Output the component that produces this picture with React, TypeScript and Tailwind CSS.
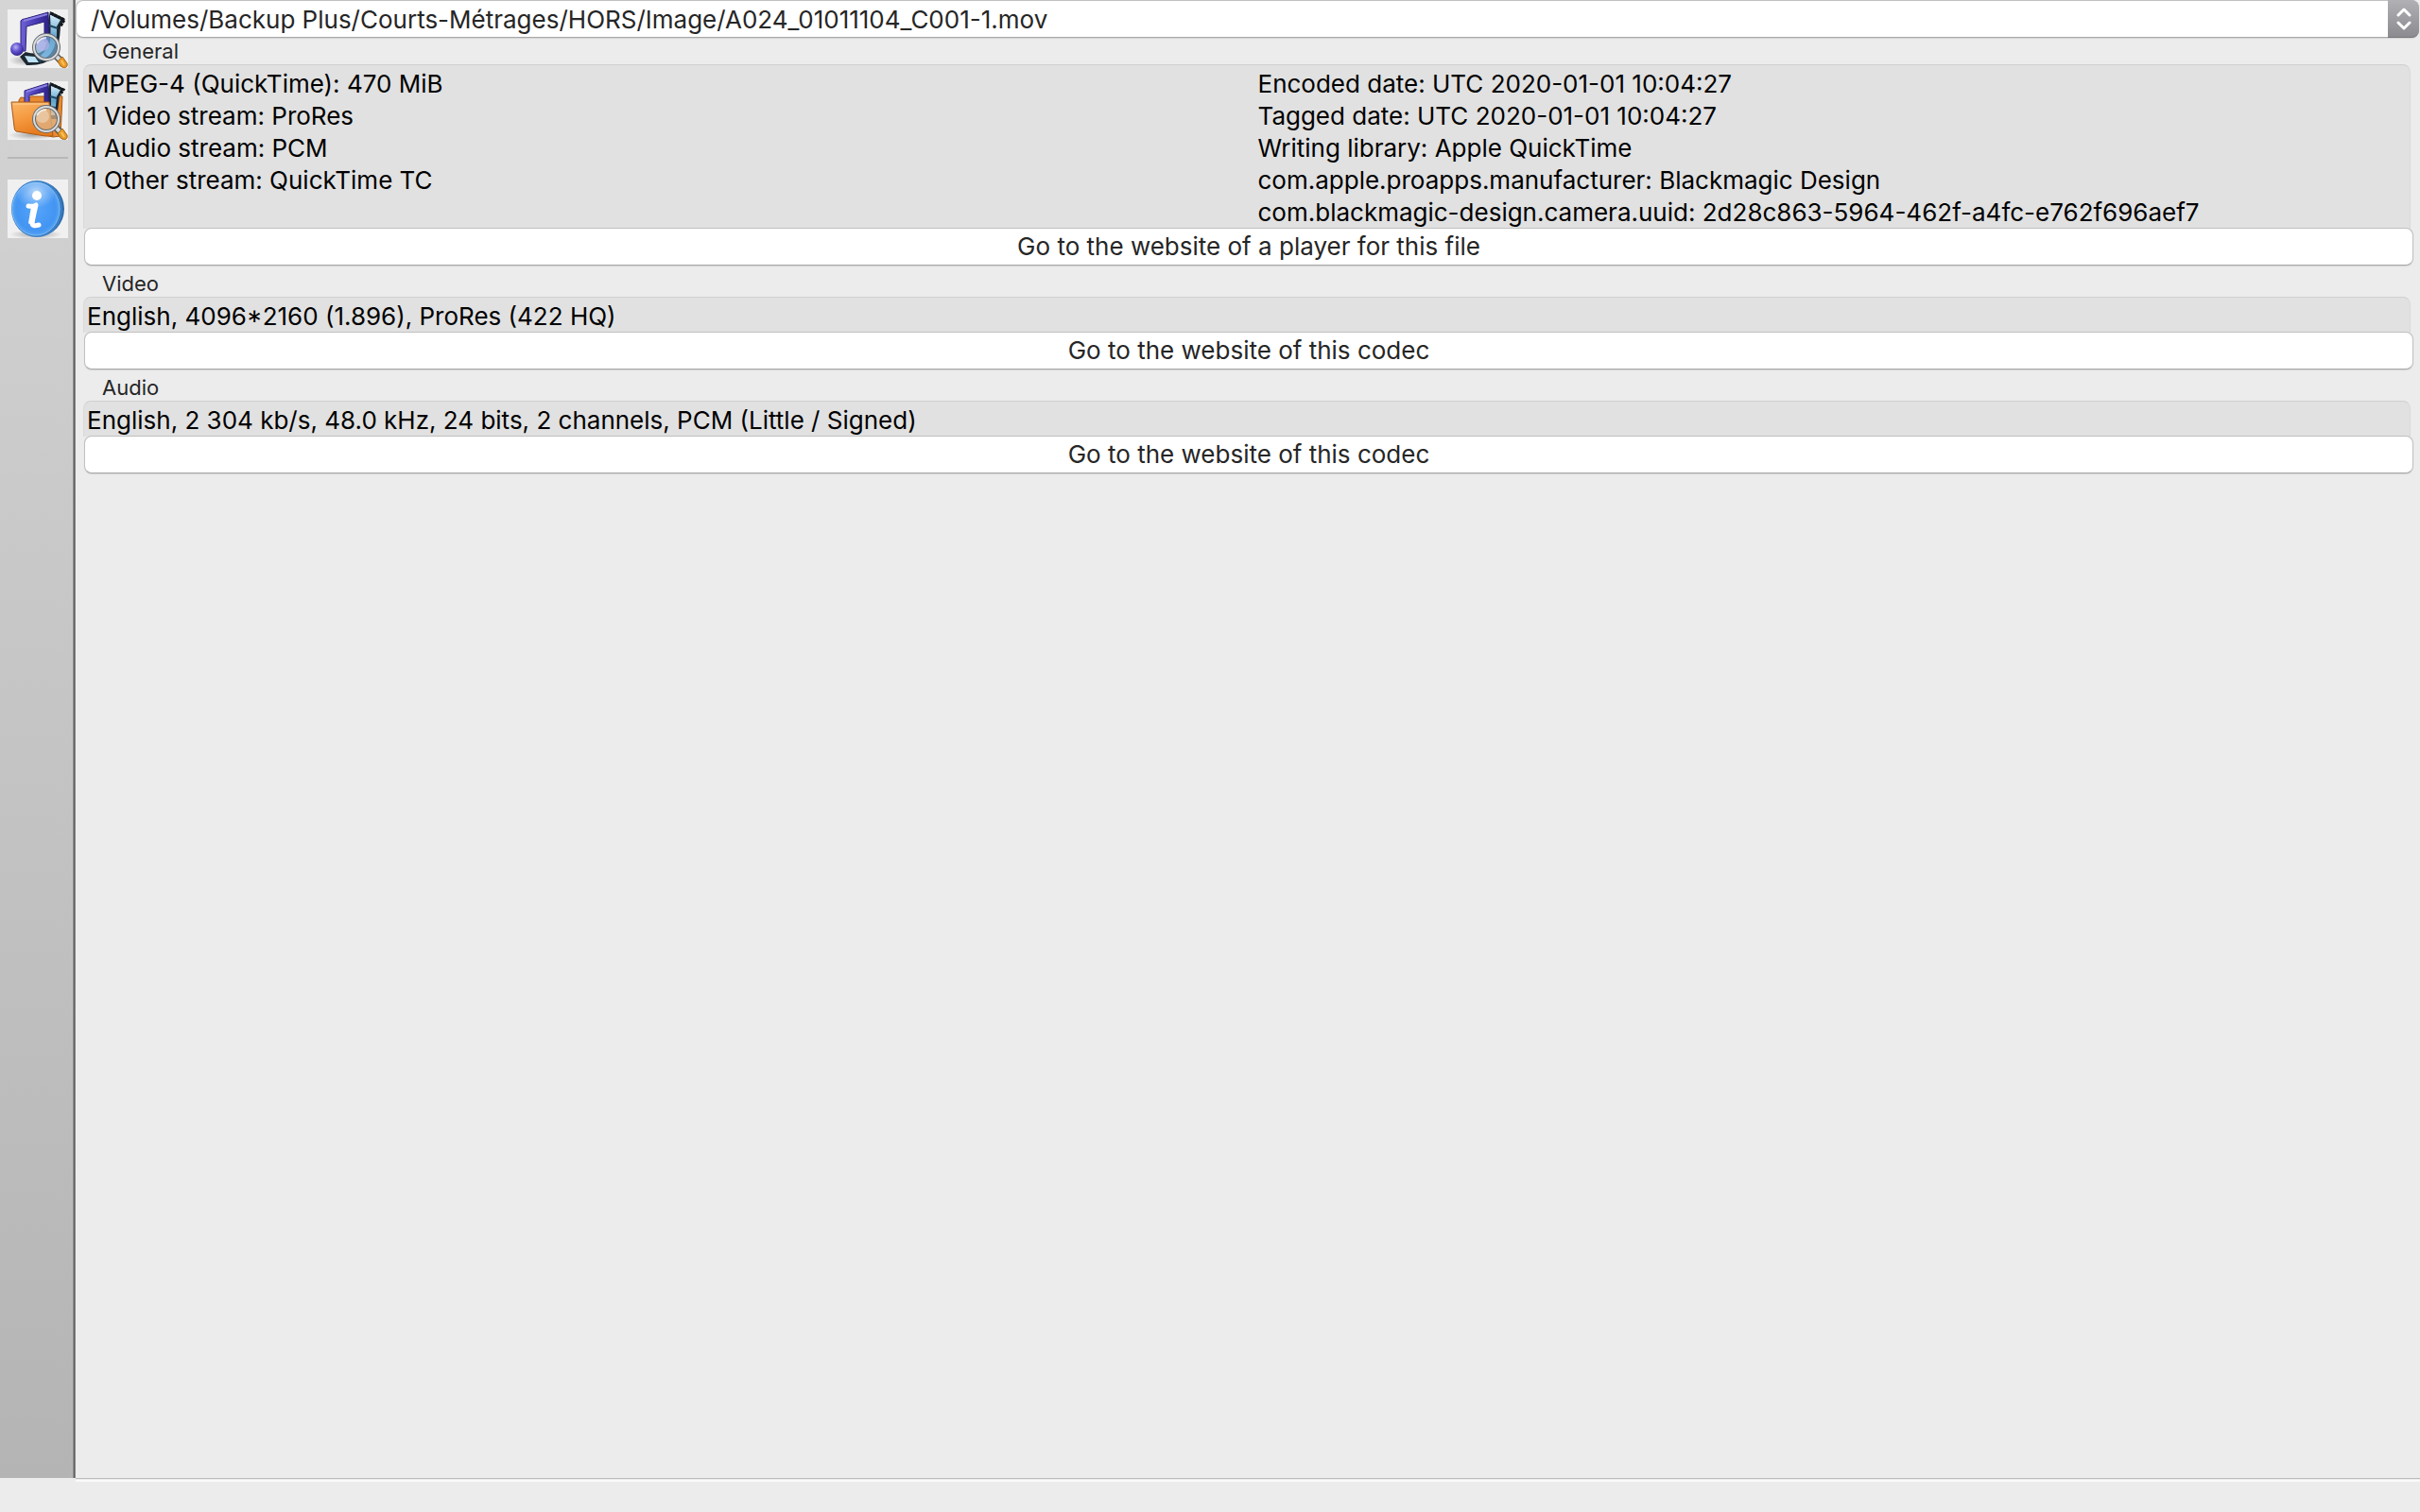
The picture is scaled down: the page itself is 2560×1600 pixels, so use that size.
import React from "react";

const general = [
  ["MPEG-4 (QuickTime): 470 MiB", "1 Video stream: ProRes", "1 Audio stream: PCM", "1 Other stream: QuickTime TC"],
  [
    "Encoded date: UTC 2020-01-01 10:04:27",
    "Tagged date: UTC 2020-01-01 10:04:27",
    "Writing library: Apple QuickTime",
    "com.apple.proapps.manufacturer: Blackmagic Design",
    "com.blackmagic-design.camera.uuid: 2d28c863-5964-462f-a4fc-e762f696aef7",
  ],
];

function Defs() {
  return (
    <svg className="absolute size-0" aria-hidden="true">
      <defs>
        <linearGradient id="note" x1="0" x2="1" y1="0" y2="0">
          <stop offset="0" stopColor="#6f63d6" />
          <stop offset="0.5" stopColor="#4a3cb4" />
          <stop offset="1" stopColor="#2f2388" />
        </linearGradient>
        <radialGradient id="head" cx="0.4" cy="0.35" r="0.65">
          <stop offset="0" stopColor="#b9b2f5" />
          <stop offset="0.5" stopColor="#6354cf" />
          <stop offset="1" stopColor="#33268f" />
        </radialGradient>
        <linearGradient id="film" x1="0" x2="0" y1="0" y2="1">
          <stop offset="0" stopColor="#d4ecfb" />
          <stop offset="0.5" stopColor="#5fa3cc" />
          <stop offset="1" stopColor="#a5d6f0" />
        </linearGradient>
        <linearGradient id="folder" x1="0" x2="0.4" y1="0" y2="1">
          <stop offset="0" stopColor="#fbb768" />
          <stop offset="0.5" stopColor="#f59a41" />
          <stop offset="1" stopColor="#e67a1d" />
        </linearGradient>
        <radialGradient id="info" cx="0.5" cy="0.5" r="0.55">
          <stop offset="0" stopColor="#55a5fb" />
          <stop offset="0.75" stopColor="#4395f2" />
          <stop offset="1" stopColor="#5fa9f4" />
        </radialGradient>
        <radialGradient id="shine" cx="0.5" cy="0.3" r="0.55">
          <stop offset="0" stopColor="#ffffff" stopOpacity="0.6" />
          <stop offset="1" stopColor="#ffffff" stopOpacity="0" />
        </radialGradient>
        <radialGradient id="shadow">
          <stop offset="0" stopColor="#000000" stopOpacity="0.3" />
          <stop offset="1" stopColor="#000000" stopOpacity="0" />
        </radialGradient>
      </defs>
    </svg>
  );
}

function Magnifier({ tint, spot }: { tint: string; spot: string }) {
  return (
    <g>
      <path d="M50 48 L58 56" stroke="#55585a" strokeWidth="7" />
      <path d="M50 48 L57 55" stroke="#d5d7d8" strokeWidth="4" />
      <path d="M53 55 L58 50 L63 57 Q64 61 60 62 L56 60 Z" fill="#e8992a" stroke="#a8691c" strokeWidth="1" />
      <path d="M57 54 L60 59" stroke="#f8c45a" strokeWidth="2" />
      <circle cx="41" cy="40" r="12" fill={tint} fillOpacity="0.72" />
      <circle cx="37" cy="37" r="7" fill={spot} fillOpacity="0.75" />
      <circle cx="41" cy="40" r="13" fill="none" stroke="#66696c" strokeWidth="4" />
      <circle cx="41" cy="40" r="13" fill="none" stroke="#d9dcde" strokeWidth="2" />
      <path d="M31 36 Q34 30 41 30" fill="none" stroke="#ffffff" strokeOpacity="0.7" strokeWidth="2" />
    </g>
  );
}

function FileIcon() {
  return (
    <svg viewBox="0 0 64 62" className="h-[62px] w-16" aria-hidden="true">
      <ellipse cx="20" cy="54" rx="19" ry="6" fill="url(#shadow)" />
      <path d="M45 2 L61 10 L56 18 Q55 38 50 50 Q38 60 20 59 L13 50 L19 45 Q33 49 38 43 Q44 34 43 12 Z" fill="#1d2830" />
      <path d="M46 6 L56 11 L52 18 Q53 36 46 46 Q40 54 31 52 Q42 44 45 34 Q46 22 45 6 Z" fill="url(#film)" />
      <path d="M44 17 L53 20 M45 29 L52 31 M30 48 L35 56" stroke="#1f4763" strokeWidth="2" />
      <path d="M18 49 L29 50 L33 56 L22 56 Z" fill="#bfe3f6" />
      <path d="M46 4 L60 11 L56 18" fill="none" stroke="#11161a" strokeWidth="3" strokeDasharray="3 1" />
      <path d="M14 12 Q15 10 18 10 L43 3 L44 34 L39 34 L39 13 L20 18 L19 44 L14 44 Z" fill="url(#note)" stroke="#2a2078" strokeWidth="1" />
      <path d="M17 12 L42 5" stroke="#8a80e2" strokeWidth="2" />
      <circle cx="10" cy="42" r="7" fill="url(#head)" />
      <Magnifier tint="#6fa9d6" spot="#b5b4ea" />
    </svg>
  );
}

function FolderIcon() {
  return (
    <svg viewBox="0 0 64 62" className="h-[62px] w-16" aria-hidden="true">
      <ellipse cx="26" cy="57" rx="25" ry="5" fill="url(#shadow)" />
      <path d="M12 20 L14 17 L22 18 L25 16 L58 16 L56 58 L48 59 L12 50 Z" fill="#e88a30" stroke="#a85a18" strokeWidth="1" />
      <path d="M45 1 L60 8 L55 15 L52 40 L43 40 L43 8 Z" fill="#1d2830" />
      <path d="M46 5 L56 9 L52 16 L50 36 L46 36 Z" fill="url(#film)" />
      <path d="M45 16 L52 18 M46 27 L51 28" stroke="#1f4763" strokeWidth="2" />
      <path d="M46 3 L59 9 L55 15" fill="none" stroke="#11161a" strokeWidth="3" strokeDasharray="3 1" />
      <path d="M18 10 L43 2 L44 26 L39 26 L39 11 L23 15 L23 26 L18 26 Z" fill="url(#note)" stroke="#2a2078" strokeWidth="1" />
      <path d="M20 11 L42 4" stroke="#8a80e2" strokeWidth="2" />
      <path d="M4 22 L44 22 L48 58 L40 58 L9 53 Q7 52 7 48 Z" fill="url(#folder)" stroke="#a85a18" strokeWidth="1" />
      <path d="M6 24 L43 24" stroke="#fdd09a" strokeWidth="1" />
      <Magnifier tint="#dcb78e" spot="#eacdae" />
    </svg>
  );
}

function InfoIcon() {
  return (
    <svg viewBox="0 0 64 62" className="h-[62px] w-16" aria-hidden="true">
      <ellipse cx="30" cy="58" rx="28" ry="5" fill="url(#shadow)" />
      <ellipse cx="33" cy="31" rx="27" ry="29" fill="#2f6cab" />
      <ellipse cx="31" cy="31" rx="27" ry="30" fill="#3b7fc6" />
      <ellipse cx="30" cy="31" rx="25" ry="28" fill="url(#info)" stroke="#7cbcf8" strokeWidth="1" />
      <ellipse cx="30" cy="19" rx="20" ry="16" fill="url(#shine)" />
      <circle cx="31" cy="17" r="5" fill="#ffffff" />
      <path d="M22 28 Q27 29 30 27 Q27 40 26 46 Q26 50 33 48" fill="none" stroke="#ffffff" strokeWidth="5" strokeLinejoin="round" strokeLinecap="round" />
      <path d="M28 29 Q26 40 25 47" fill="none" stroke="#ffffff" strokeWidth="6" />
    </svg>
  );
}

function ToolButton({ label, children }: { label: string; children: React.ReactNode }) {
  return (
    <button type="button" aria-label={label} className="block bg-[#f0f0f0]">
      {children}
    </button>
  );
}

function Group({ title, columns, action }: { title: string; columns: string[][]; action: string }) {
  return (
    <section className="mb-[5px]">
      <h2 className="h-7 pl-7 text-[22px] leading-7 text-[#262626]">{title}</h2>
      <div className="ml-2 mr-2.5 flex gap-5 rounded-t-lg border border-b-0 border-[#d9d9d9] border-t-[#d0d0d0] bg-[#e1e1e1] pl-[3px] pt-[3px] text-[26px] leading-[34px] text-black">
        {columns.map((lines) => (
          <ul key={lines[0]} className="min-w-0 flex-1">
            {lines.map((line) => (
              <li key={line}>{line}</li>
            ))}
          </ul>
        ))}
      </div>
      <div className="-mt-px flex pl-[9px] pr-[7px]">
        <button
          type="button"
          className="h-10 flex-1 rounded-lg border border-[#c0c0c0] border-b-[#a8a8a8] bg-white text-[26px] leading-9 text-[#262626] shadow-[0_1px_1px_#d4d4d4]"
        >
          {action}
        </button>
      </div>
    </section>
  );
}

export default function App() {
  return (
    <div className="flex min-h-screen flex-col bg-[#ececec] font-['Inter',sans-serif]">
      <Defs />
      <div className="flex flex-1">
        <nav className="flex shrink-0 bg-linear-to-b from-[#d5d5d5] to-[#b4b4b4]">
          <div className="flex w-[77px] flex-col items-start pl-2 pt-2.5">
            <ToolButton label="Open file"><FileIcon /></ToolButton>
            <div className="h-3.5" />
            <ToolButton label="Open folder"><FolderIcon /></ToolButton>
            <hr className="mb-[22px] mt-[18px] h-0.5 w-16 border-0 bg-[#b8b8b8]" />
            <ToolButton label="About"><InfoIcon /></ToolButton>
          </div>
          <div className="w-[3px] border-x border-l-[#8e8e8e] border-r-[#858585] bg-[#606060]" />
        </nav>
        <main className="min-w-0 flex-1">
          <div className="relative mr-px">
            <select
              aria-label="File"
              className="block h-10 w-full appearance-none rounded-lg border border-[#c0c0c0] border-b-[#a8a8a8] bg-white pl-[15px] pr-10 pt-0.5 text-[26px] leading-9 text-[#262626] shadow-[0_1px_1px_#d4d4d4]"
            >
              <option>/Volumes/Backup Plus/Courts-Métrages/HORS/Image/A024_01011104_C001-1.mov</option>
            </select>
            <div className="pointer-events-none absolute inset-y-0 right-0 flex w-[33px] items-center justify-center rounded-r-lg border-b border-[#77777b] bg-linear-to-b from-[#b0b0b5] to-[#8b8b90]">
              <svg viewBox="0 0 16 24" className="h-6 w-4" fill="none" stroke="#ffffff" strokeWidth="3" strokeLinecap="round" strokeLinejoin="round" aria-hidden="true">
                <path d="M2 8 L8 2 L14 8 M2 16 L8 22 L14 16" />
              </svg>
            </div>
          </div>
          <Group title="General" columns={general} action="Go to the website of a player for this file" />
          <Group title="Video" columns={[["English, 4096*2160 (1.896), ProRes (422 HQ)"]]} action="Go to the website of this codec" />
          <Group
            title="Audio"
            columns={[["English, 2 304 kb/s, 48.0 kHz, 24 bits, 2 channels, PCM (Little / Signed)"]]}
            action="Go to the website of this codec"
          />
        </main>
      </div>
      <footer className="flex h-9 items-start pl-20">
        <div className="h-1 flex-1 border-b-2 border-t border-b-[#fafafa] border-t-[#bbbbbb]" />
      </footer>
    </div>
  );
}
